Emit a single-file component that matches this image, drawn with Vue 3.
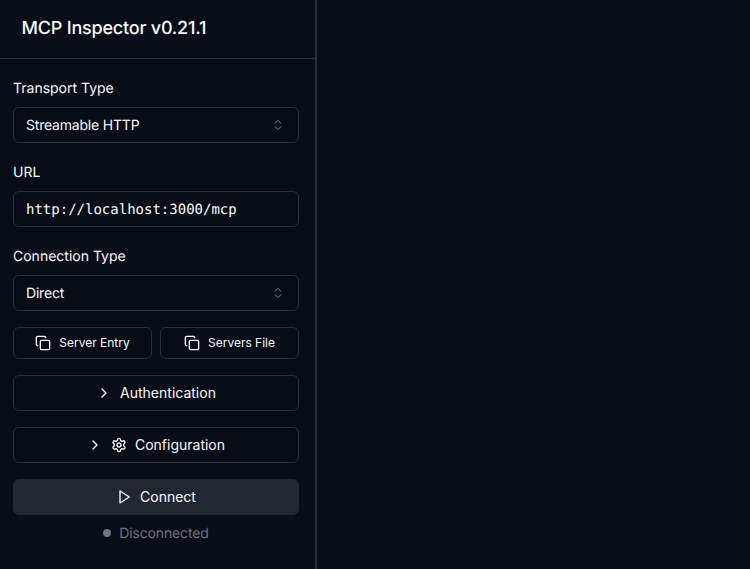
<script setup>
const fields = [
  { label: 'Transport Type', value: 'Streamable HTTP', kind: 'select' },
  { label: 'URL', value: 'http://localhost:3000/mcp', kind: 'input' },
  { label: 'Connection Type', value: 'Direct', kind: 'select' }
]
</script>

<template>
  <div class="page">
    <aside class="sidebar">
      <header class="head"><h1>MCP Inspector v0.21.1</h1></header>
      <div class="body">
        <div class="fields">
          <div v-for="f in fields" :key="f.label" class="field">
            <label>{{ f.label }}</label>
            <div class="control" :class="f.kind">
              <span>{{ f.value }}</span>
              <svg v-if="f.kind === 'select'" class="updown" viewBox="0 0 24 24"><path d="m7 15 5 5 5-5" /><path d="m7 9 5-5 5 5" /></svg>
            </div>
          </div>
        </div>
        <div class="actions">
          <div class="pair">
            <button class="btn small">
              <svg class="icon" viewBox="0 0 24 24"><rect x="8" y="8" width="14" height="14" rx="2" /><path d="M4 16c-1.1 0-2-.9-2-2V4c0-1.1.9-2 2-2h10c1.1 0 2 .9 2 2" /></svg>
              <span>Server Entry</span>
            </button>
            <button class="btn small">
              <svg class="icon" viewBox="0 0 24 24"><rect x="8" y="8" width="14" height="14" rx="2" /><path d="M4 16c-1.1 0-2-.9-2-2V4c0-1.1.9-2 2-2h10c1.1 0 2 .9 2 2" /></svg>
              <span>Servers File</span>
            </button>
          </div>
          <button class="btn wide">
            <svg class="icon" viewBox="0 0 24 24"><path d="m9 18 6-6-6-6" /></svg>
            <span class="sp">Authentication</span>
          </button>
          <button class="btn wide">
            <svg class="icon" viewBox="0 0 24 24"><path d="m9 18 6-6-6-6" /></svg>
            <svg class="icon sp" viewBox="0 0 24 24"><path d="M12.22 2h-.44a2 2 0 0 0-2 2v.18a2 2 0 0 1-1 1.73l-.43.25a2 2 0 0 1-2 0l-.15-.08a2 2 0 0 0-2.73.73l-.22.38a2 2 0 0 0 .73 2.73l.15.1a2 2 0 0 1 1 1.72v.51a2 2 0 0 1-1 1.74l-.15.09a2 2 0 0 0-.73 2.73l.22.38a2 2 0 0 0 2.73.73l.15-.08a2 2 0 0 1 2 0l.43.25a2 2 0 0 1 1 1.73V20a2 2 0 0 0 2 2h.44a2 2 0 0 0 2-2v-.18a2 2 0 0 1 1-1.73l.43-.25a2 2 0 0 1 2 0l.15.08a2 2 0 0 0 2.73-.73l.22-.39a2 2 0 0 0-.73-2.73l-.15-.08a2 2 0 0 1-1-1.74v-.5a2 2 0 0 1 1-1.74l.15-.09a2 2 0 0 0 .73-2.73l-.22-.38a2 2 0 0 0-2.73-.73l-.15.08a2 2 0 0 1-2 0l-.43-.25a2 2 0 0 1-1-1.73V4a2 2 0 0 0-2-2z" /><circle cx="12" cy="12" r="3" /></svg>
            <span class="sp">Configuration</span>
          </button>
          <button class="btn wide primary">
            <svg class="icon" viewBox="0 0 24 24"><polygon points="6 3 20 12 6 21 6 3" /></svg>
            <span class="sp">Connect</span>
          </button>
        </div>
        <div class="status"><i class="dot"></i><span>Disconnected</span></div>
      </div>
    </aside>
    <main class="main"></main>
  </div>
</template>

<style>
html, body { margin: 0; background: #090d17; }
</style>

<style scoped>
.page {
  display: flex;
  height: 569px;
  background: #090d17;
  color: #f8fafc;
  font-family: Inter, "Liberation Sans", sans-serif;
  text-rendering: geometricPrecision;
  overflow: hidden;
}
.sidebar {
  width: 315px;
  box-sizing: content-box;
  border-right: 2px solid #2a303e;
  flex: none;
}
.main { flex: 1; }
.head {
  height: 57px;
  box-sizing: content-box;
  border-bottom: 1px solid #2a303e;
  padding-bottom: 1px;
  display: flex;
  align-items: center;
  padding-left: 21.5px;
}
h1 { margin: 0; font-size: 18px; line-height: 28px; font-weight: 500; letter-spacing: -0.2px; }
.body { padding: 20px 16px 0 13px; }
.fields { display: flex; flex-direction: column; gap: 20px; }
.field { display: flex; flex-direction: column; gap: 8px; }
label { font-size: 14px; line-height: 20px; font-weight: 400; }
.control {
  height: 36px;
  box-sizing: border-box;
  border: 1px solid #2a303e;
  border-radius: 6px;
  padding: 0 12px;
  display: flex;
  align-items: center;
  justify-content: space-between;
  font-size: 14px;
}
.select { letter-spacing: -0.2px; }
.input { font-family: "DejaVu Sans Mono", monospace; padding-top: 1px; }
.updown {
  width: 14px;
  height: 14px;
  margin-right: 1px;
  fill: none;
  stroke: #f8fafc;
  stroke-width: 1.7;
  stroke-linecap: round;
  stroke-linejoin: round;
  opacity: 0.5;
}
.actions { margin-top: 16px; display: flex; flex-direction: column; gap: 16px; }
.pair { display: grid; grid-template-columns: 1fr 1fr; gap: 8px; }
.btn {
  display: flex;
  align-items: center;
  justify-content: center;
  box-sizing: border-box;
  background: #090d17;
  color: inherit;
  font-family: inherit;
  font-weight: 400;
  border: 1px solid #2a303e;
  border-radius: 6px;
  padding: 0;
}
.btn span { margin-bottom: 2px; }
.small { height: 32px; font-size: 12px; gap: 8px; }
.wide { height: 36px; font-size: 14px; }
.icon {
  width: 16px;
  height: 16px;
  flex: none;
  fill: none;
  stroke: currentColor;
  stroke-width: 2;
  stroke-linecap: round;
  stroke-linejoin: round;
}
.sp { margin-left: 8px; }
.primary { background: #222731; border-color: #222731; }
.status {
  margin-top: 8px;
  height: 20px;
  display: flex;
  align-items: center;
  justify-content: center;
  gap: 8px;
  font-size: 14px;
  letter-spacing: -0.15px;
  color: #6b7280;
}
.dot { width: 8px; height: 8px; border-radius: 50%; background: #6b7280; }
</style>
